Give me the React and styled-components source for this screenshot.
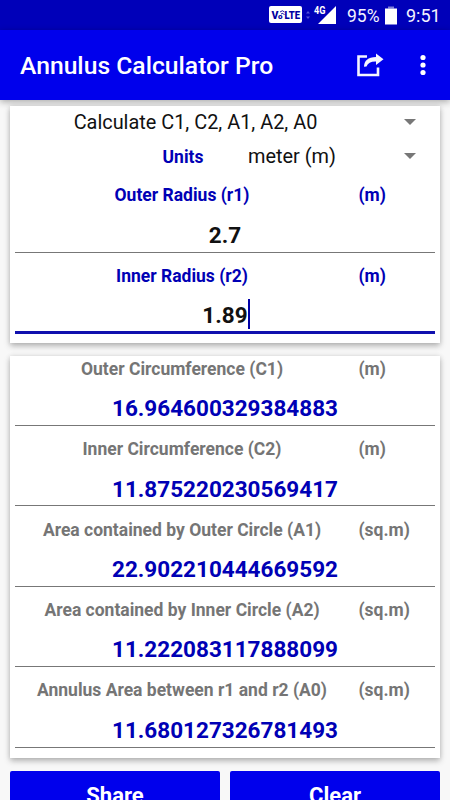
import React from "react";
import styled, { createGlobalStyle } from "styled-components";

const GlobalStyle = createGlobalStyle`
  * { box-sizing: border-box; }
  html, body { margin: 0; padding: 0; height: 800px; overflow: hidden; background: #f8f8f8; }
  body { font-family: Roboto, "Liberation Sans", sans-serif; }
`;

const Screen = styled.div`
  width: 450px;
  height: 800px;
  overflow: hidden;
  display: flex;
  flex-direction: column;
  background: #f8f8f8;
`;

const StatusBar = styled.div`
  flex: none;
  height: 30px;
  padding: 1px 10px 0 0;
  display: flex;
  align-items: center;
  justify-content: flex-end;
  background: #0000b9;
  color: #f4f4ff;
  font-size: 18px;
  line-height: 30px;
`;

const StatusIcons = styled.svg`
  width: 70px;
  height: 30px;
  display: block;
  margin: -1px 9px 0 0;
`;

const Percent = styled.span`
  width: 33px;
  white-space: nowrap;
  font-size: 17.5px;
`;

const Battery = styled.svg`
  width: 12px;
  height: 19px;
  display: block;
  margin: -1px 9px 0 5px;
`;

const Clock = styled.span`
  width: 34px;
  white-space: nowrap;
`;

const AppBar = styled.header`
  flex: none;
  height: 70px;
  padding: 2px 20px 0 20px;
  display: flex;
  align-items: center;
  background: #0000ec;
  box-shadow: 0 2px 7px rgba(0, 0, 0, 0.32);
  color: #fff;
`;

const Title = styled.h1`
  flex: 1;
  margin: 0;
  font-size: 24.7px;
  font-weight: 500;
  line-height: 36px;
  white-space: nowrap;
`;

const ShareIcon = styled.svg`
  width: 28px;
  height: 26px;
  display: block;
  margin: -3px 36px 0 0;
`;

const MoreIcon = styled.svg`
  width: 6px;
  height: 22px;
  display: block;
  margin: -2px 4.5px 0 0;
`;

const Content = styled.main`
  flex: 1;
  min-height: 0;
  padding: 6px 10px 0;
  display: flex;
  flex-direction: column;
`;

const Card = styled.section`
  flex: none;
  height: ${(p) => p.$height}px;
  margin-bottom: ${(p) => p.$gap}px;
  background: #fff;
  box-shadow: 0 3px 6px rgba(0, 0, 0, 0.26), 0 0 5px rgba(0, 0, 0, 0.1);
`;

const Spinner = styled.div`
  height: ${(p) => p.$height}px;
  display: grid;
  grid-template-columns: ${(p) => p.$columns};
  align-items: center;
  font-size: 19.9px;
  color: #111;
  white-space: nowrap;
`;

const SpinnerText = styled.span`
  text-align: ${(p) => p.$align || "center"};
`;

const SpinnerLabel = styled.span`
  padding-top: 1px;
  text-align: center;
  font-size: 17.5px;
  font-weight: 700;
  color: #0000b5;
`;

const ArrowCell = styled.span`
  padding-left: ${(p) => p.$left}px;
`;

const UnitPair = styled.div`
  display: grid;
  grid-template-columns: 82px 1fr;
  column-gap: 24px;
  align-items: center;
  padding-left: 132px;
`;

const Arrow = styled.svg`
  width: 12px;
  height: 6px;
  display: block;
`;

const Fields = styled.div`
  padding-top: ${(p) => p.$top}px;
`;

const Field = styled.div`
  height: 80.4px;
  padding: 0 5px;
`;

const FieldHead = styled.div`
  height: 27px;
  padding-bottom: 0.4px;
  display: grid;
  grid-template-columns: 334px 1fr;
  column-gap: 9.5px;
  align-items: center;
  font-size: 17.5px;
  font-weight: 700;
  color: ${(p) => p.$color};
  white-space: nowrap;
`;

const FieldName = styled.span`
  text-align: center;
`;

const Value = styled.div`
  height: ${(p) => (p.$active ? 44.5 : 43.5)}px;
  padding-top: ${(p) => (p.$active ? 11 : 10.8)}px;
  display: flex;
  justify-content: center;
  font-size: 22.5px;
  font-weight: 700;
  line-height: 30px;
  color: ${(p) => p.$color};
  border-bottom: ${(p) => (p.$active ? "3px solid #1010ae" : "1px solid #777")};
`;

const Caret = styled.span`
  flex: none;
  width: 2px;
  height: 30px;
  margin-top: -1px;
  margin-right: -2px;
  background: #0000a8;
`;

const Actions = styled.div`
  flex: none;
  display: grid;
  grid-template-columns: 1fr 1fr;
  column-gap: 10px;
`;

const Button = styled.button`
  height: 50px;
  padding: 0;
  border: 0;
  border-radius: 2px;
  background: #0000ec;
  color: #fff;
  font: 700 22px/48px Roboto, "Liberation Sans", sans-serif;
`;

const inputs = [
  { name: "Outer Radius (r1)", unit: "(m)", value: "2.7" },
  { name: "Inner Radius (r2)", unit: "(m)", value: "1.89", active: true },
];

const results = [
  { name: "Outer Circumference (C1)", unit: "(m)", value: "16.964600329384883" },
  { name: "Inner Circumference (C2)", unit: "(m)", value: "11.875220230569417" },
  { name: "Area contained by Outer Circle (A1)", unit: "(sq.m)", value: "22.902210444669592" },
  { name: "Area contained by Inner Circle (A2)", unit: "(sq.m)", value: "11.222083117888099" },
  { name: "Annulus Area between r1 and r2 (A0)", unit: "(sq.m)", value: "11.680127326781493" },
];

function DropArrow() {
  return (
    <Arrow viewBox="0 0 12 6">
      <path d="M0 0h12L6 6z" fill="#777" />
    </Arrow>
  );
}

function FieldRow({ item, labelColor, valueColor }) {
  return (
    <Field>
      <FieldHead $color={labelColor}>
        <FieldName>{item.name}</FieldName>
        <span>{item.unit}</span>
      </FieldHead>
      <Value $color={valueColor} $active={item.active}>
        {item.value}
        {item.active && <Caret />}
      </Value>
    </Field>
  );
}

export default function App() {
  return (
    <>
      <GlobalStyle />
      <Screen>
        <StatusBar>
          <StatusIcons viewBox="0 0 70 30">
            <rect x="1" y="6" width="33" height="17" rx="2" fill="#fff" />
            <g fill="#0000a0" fontFamily="Roboto, sans-serif" fontWeight="900">
              <text x="3.5" y="19" fontSize="10.5">V</text>
              <text x="10" y="19" fontSize="8">o</text>
              <text x="16.5" y="19" fontSize="10.5" textLength="15.5" lengthAdjust="spacingAndGlyphs">LTE</text>
            </g>
            <path d="M12 12q2.5-2.5 4.500 0M13 14q2-2 3.500 1" fill="none" stroke="#0000a0" strokeWidth="0.9" />
            <path d="M38 13.500l2-2.500 2 2.500zM38 16.500l2 2.500 2-2.500z" fill="#5454d8" />
            <text x="46" y="14" fontSize="10" fontWeight="700" fill="#fff" fontFamily="Roboto, sans-serif" textLength="11.5" lengthAdjust="spacingAndGlyphs">4G</text>
            <path d="M68 6v18H50z" fill="#fff" />
          </StatusIcons>
          <Percent>95%</Percent>
          <Battery viewBox="0 0 12 19">
            <rect x="3" y="0.500" width="6" height="2" fill="#8080d8" />
            <rect x="0" y="2.500" width="12" height="16" fill="#fff" />
          </Battery>
          <Clock>9:51</Clock>
        </StatusBar>
        <AppBar>
          <Title>Annulus Calculator Pro</Title>
          <ShareIcon viewBox="0 0 28 26">
            <path d="M11 4.500H2.500v18.500h19.500v-7.500" fill="none" stroke="#f4f4ff" strokeWidth="2.600" />
            <path d="M20 1.500l7.500 5.800-7.500 5.700v-3.400c-5-.2-8 1.600-9.500 4.800l-2.500.3C8 8.800 12 4.900 20 4.900z" fill="#f4f4ff" />
          </ShareIcon>
          <MoreIcon viewBox="0 0 6 22">
            <circle cx="3" cy="3.500" r="2.600" fill="#fff" />
            <circle cx="3" cy="11" r="2.600" fill="#fff" />
            <circle cx="3" cy="18.500" r="2.600" fill="#fff" />
          </MoreIcon>
        </AppBar>
        <Content>
          <Card $height={237} $gap={12.5}>
            <Spinner $height={32} $columns="371px 1fr">
              <SpinnerText>Calculate C1, C2, A1, A2, A0</SpinnerText>
              <ArrowCell $left={23}><DropArrow /></ArrowCell>
            </Spinner>
            <Spinner $height={36} $columns="346px 1fr">
              <UnitPair>
                <SpinnerLabel>Units</SpinnerLabel>
                <SpinnerText $align="left">meter (m)</SpinnerText>
              </UnitPair>
              <ArrowCell $left={48}><DropArrow /></ArrowCell>
            </Spinner>
            <Fields $top={8}>
              {inputs.map((item) => (
                <FieldRow key={item.name} item={item} labelColor="#0000b5" valueColor="#111" />
              ))}
            </Fields>
          </Card>
          <Card $height={402.5} $gap={13}>
            <Fields $top={0}>
              {results.map((item) => (
                <FieldRow key={item.name} item={item} labelColor="#757575" valueColor="#0000b5" />
              ))}
            </Fields>
          </Card>
          <Actions>
            <Button>Share</Button>
            <Button>Clear</Button>
          </Actions>
        </Content>
      </Screen>
    </>
  );
}
